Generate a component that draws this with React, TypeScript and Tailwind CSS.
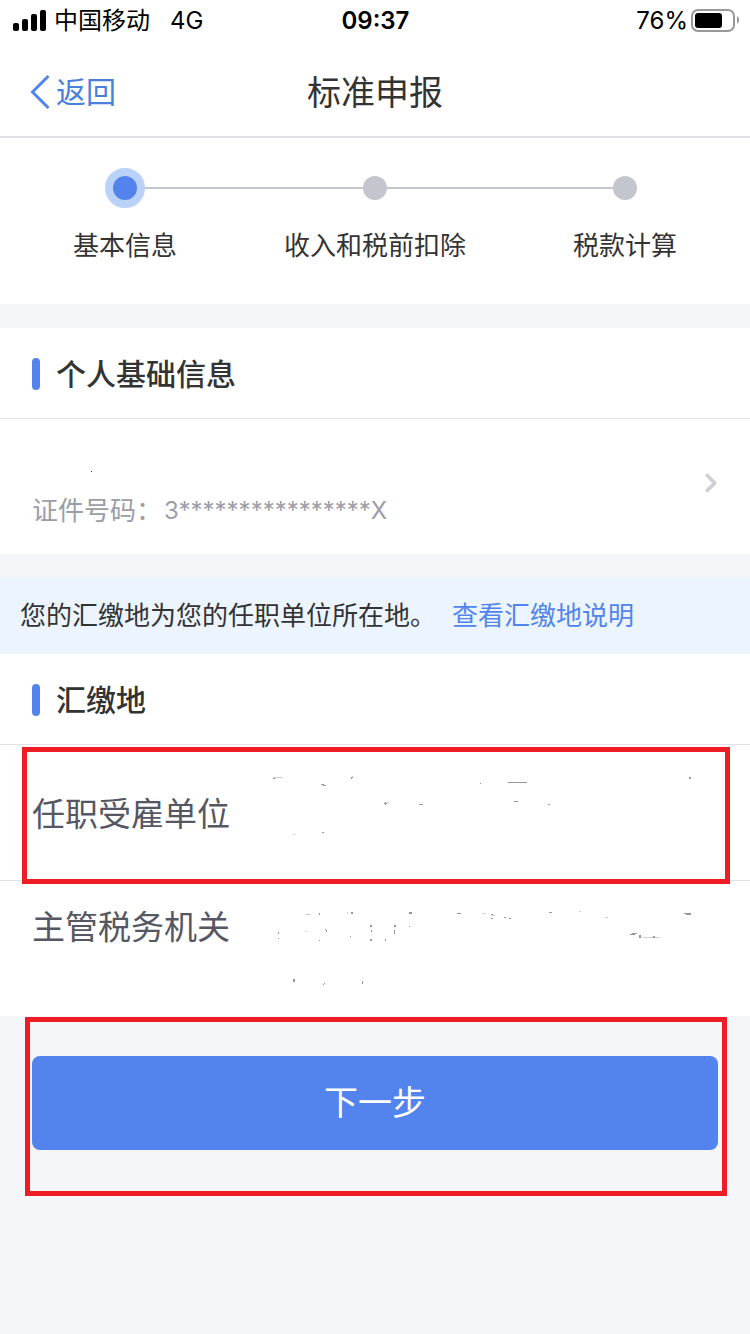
import { ChevronRight } from "lucide-react"

type Speck = [x: number, y: number, w: number, h: number, light?: boolean]

const steps = ["基本信息", "收入和税前扣除", "税款计算"]

const employerSpecks: Speck[] = [
  [5, 5, 10, 1, true], [5, 6, 2, 1], [83, 5, 2, 1], [83, 6, 1, 1], [84, 4, 1, 1, true],
  [53, 12, 3, 1], [55, 13, 3, 1], [116, 30, 5, 1, true], [116, 31, 3, 1], [117, 32, 1, 1],
  [151, 32, 4, 1], [212, 11, 1, 1], [240, 10, 19, 1], [54, 60, 2, 1], [25, 62, 2, 1, true],
  [246, 29, 4, 1], [280, 32, 2, 1], [421, 5, 2, 2],
]

const authoritySpecks: Speck[] = [
  [37, 6, 6, 1, true], [51, 5, 1, 2], [79, 4, 1, 2, true], [83, 4, 2, 2], [141, 4, 3, 2],
  [189, 5, 4, 1], [215, 5, 3, 1, true], [223, 6, 2, 1], [224, 7, 3, 1, true], [223, 10, 2, 1],
  [236, 9, 2, 1], [241, 10, 2, 1], [102, 17, 2, 2], [103, 22, 1, 2], [102, 31, 2, 2],
  [117, 31, 1, 2], [126, 17, 2, 2], [126, 22, 1, 4], [141, 18, 1, 1], [10, 24, 1, 2],
  [10, 30, 1, 1], [37, 23, 2, 1, true], [57, 21, 1, 1], [58, 22, 1, 2], [82, 28, 1, 1],
  [51, 32, 1, 1], [25, 71, 2, 3], [56, 75, 1, 1], [55, 76, 1, 1], [94, 73, 1, 3],
  [281, 4, 3, 1], [311, 3, 2, 1, true], [337, 9, 3, 1, true], [416, 5, 7, 1], [418, 6, 5, 1],
  [364, 25, 5, 1], [362, 26, 5, 1], [371, 27, 2, 3], [374, 29, 18, 1, true], [385, 28, 2, 2],
]

function ErasedText({ specks }: { specks: Speck[] }) {
  return (
    <svg width="440" height="80" viewBox="0 0 440 80" shapeRendering="crispEdges" aria-hidden="true">
      {specks.map(([x, y, w, h, light], i) => (
        <rect key={i} x={x} y={y} width={w} height={h} fill={light ? "#cfcfd4" : "#96969f"} />
      ))}
    </svg>
  )
}

function SectionTitle({ children }: { children: string }) {
  return (
    <div className="flex items-center gap-4 border-b border-[#e2e2e6] px-8 pt-6 pb-[22px]">
      <span className="h-8 w-2 rounded-full bg-[#5384ed]" />
      <h2 className="text-[30px] leading-[44px] font-medium">{children}</h2>
    </div>
  )
}

function StatusBar() {
  return (
    <div className="grid h-10 grid-cols-3 items-center pt-px pr-[11px] pl-3 text-2xl text-black">
      <div className="flex items-center whitespace-nowrap">
        <svg width="34" height="22" viewBox="0 0 34 22" aria-hidden="true">
          <rect x="1" y="13" width="6" height="8" rx="2" />
          <rect x="10" y="9" width="6" height="12" rx="2" />
          <rect x="19" y="4" width="6" height="17" rx="2" />
          <rect x="28" y="0" width="6" height="21" rx="2" />
        </svg>
        <span className="ml-2">中国移动</span>
        <span className="ml-5">4G</span>
      </div>
      <div className="text-center font-semibold">09:37</div>
      <div className="flex items-center justify-end gap-[3px]">
        <span>76%</span>
        <svg width="48" height="24" viewBox="0 0 48 24" aria-hidden="true">
          <rect x="1" y="1" width="42" height="21" rx="6" fill="none" stroke="#999" strokeWidth="2" />
          <rect x="4" y="4" width="27" height="15" rx="3" />
          <path d="M46 7c3 1.500 3 6 0 7.500z" fill="#999" />
        </svg>
      </div>
    </div>
  )
}

export default function App() {
  return (
    <div className="min-h-screen bg-[#f4f6fa] font-[Inter,'Noto_Sans_CJK_SC',sans-serif] text-[#333]">
      <div className="bg-white">
        <StatusBar />
        <header className="grid h-[98px] grid-cols-3 items-center border-b-2 border-[#e2e2e6] px-[30px] pt-2">
          <a href="#" className="flex items-center gap-[6px] text-[30px] text-[#4a80dc]">
            <svg width="20" height="34" viewBox="0 0 20 34" fill="none" stroke="#5384ed" strokeWidth="3" aria-hidden="true">
              <path d="M18.500 1L2.500 17l16 16" />
            </svg>
            返回
          </a>
          <h1 className="text-center text-[34px]">标准申报</h1>
        </header>

        {/* Steps */}
        <ol className="flex pt-[30px] pb-10">
          {steps.map((step, i) => (
            <li key={step} className="flex-1 text-center">
              <div className="flex h-10 items-center">
                <span className={`h-[2px] flex-1 ${i === 0 ? "" : "bg-[#c4c6ce]"}`} />
                {i === 0 ? (
                  <span className="size-10 rounded-full border-8 border-[#bad2f7] bg-[#5384ed]" />
                ) : (
                  <span className="size-6 rounded-full bg-[#c4c6ce]" />
                )}
                <span className={`h-[2px] flex-1 ${i === steps.length - 1 ? "" : "bg-[#c4c6ce]"}`} />
              </div>
              <p className="mt-5 text-[26px] leading-9">{step}</p>
            </li>
          ))}
        </ol>
      </div>

      {/* Personal info */}
      <section className="mt-6 bg-white">
        <SectionTitle>个人基础信息</SectionTitle>
        <a href="#" className="flex items-center justify-between pt-4 pr-6 pb-[23px] pl-8 text-[#9b9da7]">
          <div>
            <svg className="h-14" width="120" height="56" viewBox="0 0 120 56" aria-hidden="true">
              <rect x="59" y="36" width="1" height="1" fill="#333" />
            </svg>
            <p className="flex h-10 items-center gap-[2px] text-[26px] leading-10">
              证件号码：
              <span className="text-2xl leading-10">3****************X</span>
            </p>
          </div>
          <ChevronRight size={30} strokeWidth={3} className="text-[#d0d0d5]" />
        </a>
      </section>

      <p className="mt-6 bg-[#ebf4ff] px-5 py-[18px] text-[26px] leading-10">
        您的汇缴地为您的任职单位所在地。
        <a href="#" className="ml-4 text-[#5384ed]">
          查看汇缴地说明
        </a>
      </p>

      {/* Settlement place */}
      <section className="bg-white">
        <SectionTitle>汇缴地</SectionTitle>
        <div className="relative flex h-[136px] items-start border-b border-[#e2e2e6] px-8 pt-[27px] text-[#555763]">
          <div className="w-[236px] pt-5 text-[33px] leading-[44px]">任职受雇单位</div>
          <ErasedText specks={employerSpecks} />
          <div className="pointer-events-none absolute top-[2px] right-5 -bottom-1 left-[22px] border-[5px] border-[#ee1c25]" />
        </div>
        <div className="flex h-[135px] items-start px-8 text-[#555763]">
          <div className="w-[236px] pt-6 text-[33px] leading-[44px]">主管税务机关</div>
          <div className="pt-[27px]">
            <ErasedText specks={authoritySpecks} />
          </div>
        </div>
      </section>

      <div className="relative px-8 pt-10 pb-[46px]">
        <button type="button" className="h-[94px] w-full rounded-lg bg-[#5384ed] pb-[2px] text-[34px] text-white">
          下一步
        </button>
        <div className="pointer-events-none absolute top-px right-[23px] bottom-0 left-[25px] border-[5px] border-[#ee1c25]" />
      </div>
    </div>
  )
}
